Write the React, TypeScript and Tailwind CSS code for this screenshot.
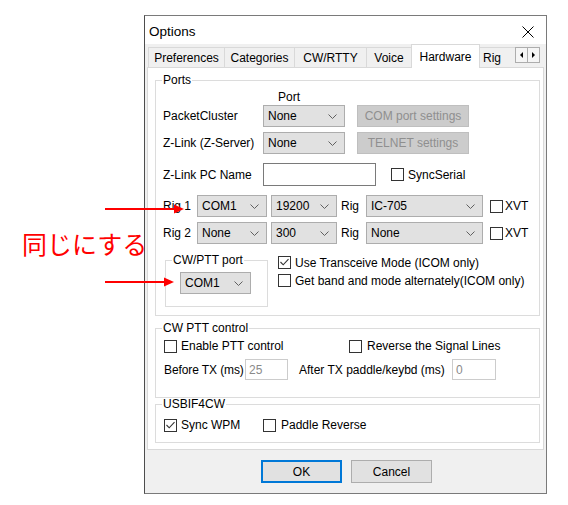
import React from 'react'

const Check = ({ checked = false }: { checked?: boolean }) => (
    <span className="flex h-[13px] w-[13px] shrink-0 items-center justify-center border border-[#333333] bg-white">
        {checked && (
            <svg width="11" height="11" viewBox="0 0 11 11">
                <path d="M1.5 5 L4.2 7.8 L9.5 2.2" fill="none" stroke="#333333" strokeWidth="1.1" />
            </svg>
        )}
    </span>
)

const Select = ({ value, w, className = '' }: { value: string; w: string; className?: string }) => (
    <div className={`flex h-[22px] shrink-0 items-center justify-between border border-[#adadad] bg-[#e1e1e1] pl-[4px] pr-[7px] ${w} ${className}`}>
        <span>{value}</span>
        <svg width="9" height="5" viewBox="0 0 9 5">
            <path d="M0.5 0.5 L4.5 4.5 L8.5 0.5" fill="none" stroke="#606060" strokeWidth="1" />
        </svg>
    </div>
)

const Group = ({ title, className, children }: { title: string; className: string; children: React.ReactNode }) => (
    <fieldset className={`border border-[#dcdcdc] ${className}`}>
        <legend className="ml-[6px] px-px leading-[12px]">{title}</legend>
        {children}
    </fieldset>
)

const tabs = [
    { label: 'Preferences', w: 'w-[77px] border-l' },
    { label: 'Categories', w: 'w-[70px]' },
    { label: 'CW/RTTY', w: 'w-[72px]' },
    { label: 'Voice', w: 'w-[45px]' },
]

const App = () => {
    return (
        <div className="relative flex h-[505px] w-[568px] overflow-hidden whitespace-nowrap bg-white text-[12px] text-black font-['Liberation_Sans',Arial,sans-serif]">
            {/* note on the left */}
            <div className="w-[144px] shrink-0 pl-[22px] pt-[228px]">
                <span className="text-[25px] leading-[30px] text-[#ff0000] font-['Noto_Sans_CJK_JP',sans-serif]">同じにする</span>
            </div>

            {/* dialog */}
            <div className="mt-[15px] flex h-[479px] w-[403px] shrink-0 flex-col border border-[#7a7a7a] border-l-[#4d4d4d] bg-[#f0f0f0]">
                <div className="flex h-[28px] shrink-0 items-center justify-between bg-white pl-[4px] pr-[12px] pt-[4px]">
                    <span className="text-[13.5px]">Options</span>
                    <svg width="12" height="12" viewBox="0 0 12 12">
                        <path d="M0.5 0.5 L11.5 11.5 M11.5 0.5 L0.5 11.5" stroke="#000" strokeWidth="1" />
                    </svg>
                </div>

                {/* tabs */}
                <div className="flex h-[23px] shrink-0 items-end pl-[3px]">
                    {tabs.map((t) => (
                        <div key={t.label} className={`flex h-[20px] items-center justify-center border-t border-r border-[#d9d9d9] ${t.w}`}>
                            {t.label}
                        </div>
                    ))}
                    <div className="relative z-10 -mb-px -ml-px flex h-[24px] w-[69px] items-center justify-center border-x border-t border-[#d9d9d9] bg-white">
                        Hardware
                    </div>
                    <div className="flex h-[20px] w-[35px] items-center border-t border-[#d9d9d9] pl-[3px]">
                        Rig
                    </div>
                    <div className="mb-[4px] flex">
                        <div className="flex h-[16px] w-[13px] items-center justify-center border border-[#adadad] bg-[#f5f5f5]">
                            <svg width="3" height="6" viewBox="0 0 3 6"><path d="M3 0 L0 3 L3 6 Z" fill="#000" /></svg>
                        </div>
                        <div className="-ml-px flex h-[16px] w-[13px] items-center justify-center border border-[#adadad] bg-[#f5f5f5]">
                            <svg width="3" height="6" viewBox="0 0 3 6"><path d="M0 0 L3 3 L0 6 Z" fill="#000" /></svg>
                        </div>
                    </div>
                </div>

                {/* page */}
                <div className="ml-[2px] h-[383px] w-[397px] shrink-0 border border-[#d9d9d9] bg-white">
                    <Group title="Ports" className="ml-[7px] mt-[6px] w-[385px] pb-[8px]">
                        <div className="mt-[4px] h-[14px] pl-[122px] leading-[14px]">Port</div>
                        <div className="mt-[1px] flex h-[22px] items-center pl-[7px]">
                            <span className="w-[100px]">PacketCluster</span>
                            <Select value="None" w="w-[82px]" />
                            <div className="ml-[12px] flex h-[22px] w-[112px] items-center justify-center border border-[#bfbfbf] bg-[#cccccc] text-[#8f8f8f]">
                                COM port settings
                            </div>
                        </div>
                        <div className="mt-[5px] flex h-[22px] items-center pl-[7px]">
                            <span className="w-[100px]">Z-Link (Z-Server)</span>
                            <Select value="None" w="w-[82px]" />
                            <div className="ml-[12px] flex h-[22px] w-[112px] items-center justify-center border border-[#bfbfbf] bg-[#cccccc] text-[#8f8f8f]">
                                TELNET settings
                            </div>
                        </div>
                        <div className="mt-[9px] flex h-[23px] items-center pl-[7px]">
                            <span className="w-[100px]">Z-Link PC Name</span>
                            <div className="h-[23px] w-[113px] border border-[#7a7a7a] bg-white" />
                            <span className="ml-[15px]"><Check /></span>
                            <span className="ml-[4px]">SyncSerial</span>
                        </div>
                        <div className="mt-[9px] flex h-[22px] items-center pl-[7px]">
                            <span className="w-[34px]">Rig 1</span>
                            <Select value="COM1" w="w-[70px]" />
                            <Select value="19200" w="w-[66px]" className="ml-[4px]" />
                            <span className="ml-[4px] w-[25px]">Rig</span>
                            <Select value="IC-705" w="w-[117px]" />
                            <span className="ml-[7px]"><Check /></span>
                            <span className="ml-[2px]">XVT</span>
                        </div>
                        <div className="mt-[5px] flex h-[22px] items-center pl-[7px]">
                            <span className="w-[34px]">Rig 2</span>
                            <Select value="None" w="w-[70px]" />
                            <Select value="300" w="w-[66px]" className="ml-[4px]" />
                            <span className="ml-[4px] w-[25px]">Rig</span>
                            <Select value="None" w="w-[117px]" />
                            <span className="ml-[7px]"><Check /></span>
                            <span className="ml-[2px]">XVT</span>
                        </div>
                        <div className="mt-[10px] flex items-start pl-[9px]">
                            <Group title="CW/PTT port" className="w-[103px] shrink-0 pb-[12px]">
                                <Select value="COM1" w="w-[71px]" className="ml-[14px] mt-[6px]" />
                            </Group>
                            <div className="ml-[10px] mt-[2px] flex flex-col gap-[5px]">
                                <div className="flex h-[13px] items-center">
                                    <Check checked />
                                    <span className="ml-[4px]">Use Transceive Mode (ICOM only)</span>
                                </div>
                                <div className="flex h-[13px] items-center">
                                    <Check />
                                    <span className="ml-[4px]">Get band and mode alternately(ICOM only)</span>
                                </div>
                            </div>
                        </div>
                    </Group>

                    <Group title="CW PTT control" className="ml-[7px] mt-[6px] w-[385px] pb-[17px]">
                        <div className="mt-[5px] flex h-[14px] items-center pl-[8px]">
                            <div className="flex w-[185px] items-center">
                                <Check />
                                <span className="ml-[4px]">Enable PTT control</span>
                            </div>
                            <Check />
                            <span className="ml-[5px]">Reverse the Signal Lines</span>
                        </div>
                        <div className="mt-[6px] flex h-[21px] items-center pl-[8px]">
                            <span className="w-[81px] tracking-[-0.1px]">Before TX (ms)</span>
                            <div className="flex h-[21px] w-[43px] items-center border border-[#cccccc] pl-[3px] text-[#8a8a8a]">25</div>
                            <span className="ml-[11px] w-[153px]">After TX paddle/keybd (ms)</span>
                            <div className="flex h-[21px] w-[44px] items-center border border-[#cccccc] pl-[3px] text-[#8a8a8a]">0</div>
                        </div>
                    </Group>

                    <Group title="USBIF4CW" className="ml-[7px] w-[385px] pb-[10px]">
                        <div className="mt-[8px] flex h-[14px] items-center pl-[8px]">
                            <div className="flex w-[99px] items-center">
                                <Check checked />
                                <span className="ml-[4px]">Sync WPM</span>
                            </div>
                            <Check />
                            <span className="ml-[5px]">Paddle Reverse</span>
                        </div>
                    </Group>
                </div>

                <div className="mt-[10px] flex justify-center gap-[9px] pl-[2px]">
                    <div className="flex h-[23px] w-[81px] items-center justify-center border-2 border-[#0078d7] bg-[#e1e1e1]">OK</div>
                    <div className="flex h-[23px] w-[81px] items-center justify-center border border-[#adadad] bg-[#e1e1e1]">Cancel</div>
                </div>
            </div>

            {/* red arrows */}
            <svg className="pointer-events-none absolute left-0 top-0 z-20" width="568" height="505">
                <line x1="105" y1="209" x2="176" y2="209" stroke="#ff0000" strokeWidth="2" />
                <polygon points="174,204.5 184,209 174,213.5" fill="#ff0000" />
                <line x1="105" y1="282" x2="166" y2="282" stroke="#ff0000" strokeWidth="2" />
                <polygon points="164,277.5 174,282 164,286.5" fill="#ff0000" />
            </svg>
        </div>
    )
}

export default App
